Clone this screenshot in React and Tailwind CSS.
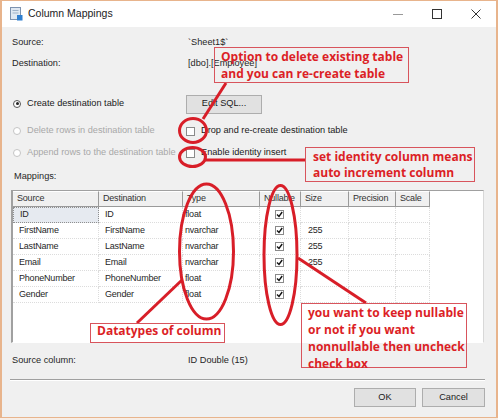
import { useState } from "react";

const cols = [
  { key: "source", label: "Source", w: "w-[86px]" },
  { key: "dest", label: "Destination", w: "w-[84px]" },
  { key: "type", label: "Type", w: "w-[77px]" },
  { key: "nullable", label: "Nullable", w: "w-[41px]" },
  { key: "size", label: "Size", w: "w-[48px]" },
  { key: "precision", label: "Precision", w: "w-[47px]" },
  { key: "scale", label: "Scale", w: "w-[34px]" },
];

const rows = [
  { source: "ID", dest: "ID", type: "float", size: "" },
  { source: "FirstName", dest: "FirstName", type: "nvarchar", size: "255" },
  { source: "LastName", dest: "LastName", type: "nvarchar", size: "255" },
  { source: "Email", dest: "Email", type: "nvarchar", size: "255" },
  { source: "PhoneNumber", dest: "PhoneNumber", type: "float", size: "" },
  { source: "Gender", dest: "Gender", type: "float", size: "" },
];

function CheckBox({ checked }) {
  return (
    <div className="w-[9px] h-[9px] border border-[#8a8a8a] bg-white flex items-center justify-center">
      {checked && (
        <svg width="7" height="7" viewBox="0 0 7 7">
          <path d="M1 3.5 L3 5.5 L6.2 1" stroke="#111" strokeWidth="1.4" fill="none" />
        </svg>
      )}
    </div>
  );
}

function Radio({ checked, disabled }) {
  return (
    <div className={"w-[8px] h-[8px] rounded-full border bg-white flex items-center justify-center " + (disabled ? "border-[#c4c4c4]" : "border-[#555]")}>
      {checked && <div className="w-[3px] h-[3px] rounded-full bg-[#222]" />}
    </div>
  );
}

function Note({ className, children }) {
  return (
    <div className={"absolute border border-[#d8545c] text-[#dc1f26] font-bold text-[12px] pl-[6px] " + className} style={{ fontFamily: '"Open Sans", sans-serif' }}>
      {children}
    </div>
  );
}

export default function App() {
  const [selected] = useState(0);

  return (
    <div className="relative w-[498px] h-[420px] bg-[#f6ede6] overflow-hidden" style={{ fontFamily: '"Liberation Sans", Arial, sans-serif' }}>
      <div className="h-[418px] border-x-2 border-t border-b border-[#e8b48c] flex flex-col">
        {/* title bar */}
        <div className="h-[26px] bg-white flex items-center pl-[8px] shrink-0">
          <svg width="13" height="14" viewBox="0 0 13 14">
            <rect x="0.5" y="0.5" width="10" height="12" fill="#dfe8f2" stroke="#7d93b0" />
            <rect x="2.5" y="3" width="6" height="1" fill="#9fb2c8" />
            <rect x="2.5" y="5.5" width="6" height="1" fill="#9fb2c8" />
            <rect x="7" y="8" width="5.5" height="5.5" fill="#2f7fd0" />
          </svg>
          <span className="ml-[5px] text-[10.5px] text-[#222]">Column Mappings</span>
          <div className="flex-1" />
          <div className="flex items-center">
            <svg width="12" height="12" viewBox="0 0 12 12" className="mr-[27px]">
              <path d="M1 6.5 H11" stroke="#999" strokeWidth="1" />
            </svg>
            <svg width="12" height="12" viewBox="0 0 12 12" className="mr-[27px]">
              <rect x="1.5" y="1.5" width="9" height="9" fill="none" stroke="#333" strokeWidth="1" />
            </svg>
            <svg width="12" height="12" viewBox="0 0 12 12" className="mr-[14px]">
              <path d="M1.5 1.5 L10.5 10.5 M10.5 1.5 L1.5 10.5" stroke="#333" strokeWidth="1" />
            </svg>
          </div>
        </div>

        {/* body */}
        <div className="flex-1 bg-[#f0f0f0] pl-[9px] pr-[11px] flex flex-col text-[9.2px] text-[#262626]">
          <div className="h-[21px] mt-[5px] flex items-center">
            <span className="w-[177px] pl-[1px]">Source:</span>
            <span>`Sheet1$`</span>
          </div>
          <div className="h-[21px] flex items-center">
            <span className="w-[177px] pl-[1px]">Destination:</span>
            <span>[dbo].[Employee]</span>
          </div>

          <div className="h-[20px] mt-[20px] flex items-center">
            <div className="w-[175px] pl-[2px] flex items-center">
              <Radio checked />
              <span className="ml-[6px] text-[#1a1a1a]">Create destination table</span>
            </div>
            <button className="w-[76px] h-[19px] bg-[#e1e1e1] border border-[#adadad] text-[9.2px] text-[#1a1a1a]">Edit SQL...</button>
          </div>

          <div className="h-[20px] mt-[7px] flex items-center">
            <div className="w-[175px] pl-[2px] flex items-center text-[#a8a8a8]">
              <Radio disabled />
              <span className="ml-[6px]">Delete rows in destination table</span>
            </div>
            <CheckBox />
            <span className="ml-[6px] text-[#1a1a1a]">Drop and re-create destination table</span>
          </div>

          <div className="h-[20px] mt-[2px] flex items-center">
            <div className="w-[175px] pl-[2px] flex items-center text-[#a8a8a8]">
              <Radio disabled />
              <span className="ml-[6px]">Append rows to the destination table</span>
            </div>
            <CheckBox />
            <span className="ml-[6px] text-[#1a1a1a]">Enable identity insert</span>
          </div>

          <div className="h-[18px] mt-[5px] flex items-center pl-[3px]">Mappings:</div>

          {/* mappings grid */}
          <div className="mt-[4px] w-[473px] h-[153px] border-t border-l-2 border-[#a0a0a0] border-r border-r-[#d8d8d8] border-b border-b-[#ffffff] bg-white flex flex-col text-[9px] tracking-[-0.2px]">
            <div className="flex h-[16px] shrink-0">
              {cols.map((c) => (
                <div key={c.key} className={c.w + " h-[16px] bg-[#f0f0f0] border-r border-b border-[#9a9a9a] border-t border-t-white flex items-center pl-[4px] text-[#333] overflow-hidden whitespace-nowrap"}>
                  {c.label}
                </div>
              ))}
            </div>
            {rows.map((r, i) => (
              <div key={r.source} className="flex h-[16px] shrink-0">
                <div className={"w-[86px] flex items-center pl-[6px] border-r border-b border-dotted " + (i === selected ? "bg-[#e6eaf0] border border-[#8f8f8f]" : "border-[#dcdcdc]")}>{r.source}</div>
                <div className="w-[84px] flex items-center pl-[6px] border-r border-b border-dotted border-[#dcdcdc]">{r.dest}</div>
                <div className="w-[77px] flex items-center pl-[2px] border-r border-b border-dotted border-[#dcdcdc]">{r.type}</div>
                <div className="w-[41px] flex items-center justify-center pr-[2px] border-r border-b border-dotted border-[#dcdcdc]">
                  <CheckBox checked />
                </div>
                <div className="w-[48px] flex items-center pl-[7px] border-r border-b border-dotted border-[#dcdcdc]">{r.size}</div>
                <div className="w-[47px] border-r border-b border-dotted border-[#dcdcdc]" />
                <div className="w-[34px] border-r border-b border-dotted border-[#dcdcdc]" />
              </div>
            ))}
          </div>

          <div className="h-[18px] mt-[9px] flex items-center">
            <span className="w-[177px] pl-[1px]">Source column:</span>
            <span>ID Double (15)</span>
          </div>

          <div className="mt-[9px] ml-[-1px] w-[475px] h-[2px] border-t border-[#a0a0a0] border-b border-b-white" />

          <div className="mt-[7px] flex justify-end gap-[6px] pr-[0px]">
            <button className="w-[62px] h-[19px] bg-[#e1e1e1] border border-[#adadad] text-[9.2px] text-[#1a1a1a]">OK</button>
            <button className="w-[63px] h-[19px] bg-[#e1e1e1] border border-[#adadad] text-[9.2px] text-[#1a1a1a]">Cancel</button>
          </div>
        </div>
      </div>

      {/* annotations drawn on top of the screenshot */}
      <svg className="absolute inset-0 pointer-events-none" width="498" height="420" viewBox="0 0 498 420">
        <g stroke="#d81e28" strokeWidth="3" fill="none">
          <ellipse cx="193" cy="130.5" rx="13.5" ry="12" />
          <ellipse cx="192.5" cy="157" rx="13" ry="9.5" />
          <ellipse cx="206.5" cy="251.5" rx="27" ry="67.5" />
          <ellipse cx="280.5" cy="255" rx="16.5" ry="69.5" />
          <path d="M203 119 L226 83" />
          <path d="M205 160 L305 160" />
          <path d="M182 280 L137 323" />
          <path d="M298 258 L366 303" />
        </g>
      </svg>

      <Note className="left-[214px] top-[47px] w-[195px] h-[36px] leading-[17px] pt-[0px]">
        <div>Option to delete existing table</div>
        <div>and you can re-create table</div>
      </Note>
      <Note className="left-[305px] top-[147px] w-[170px] h-[35px] leading-[16px] pl-[7px] pt-[1px]">
        <div>set identity column means</div>
        <div>auto increment column</div>
      </Note>
      <Note className="left-[90px] top-[323px] w-[135px] h-[20px] leading-[13px] pl-[5px]">
        <div>Datatypes of column</div>
      </Note>
      <Note className="left-[301px] top-[303px] w-[166px] h-[65px] leading-[17px] pl-[3px] pt-[0px]">
        <div>you want to keep nullable</div>
        <div>or not if you want</div>
        <div>nonnullable then uncheck</div>
        <div>check box</div>
      </Note>
    </div>
  );
}
